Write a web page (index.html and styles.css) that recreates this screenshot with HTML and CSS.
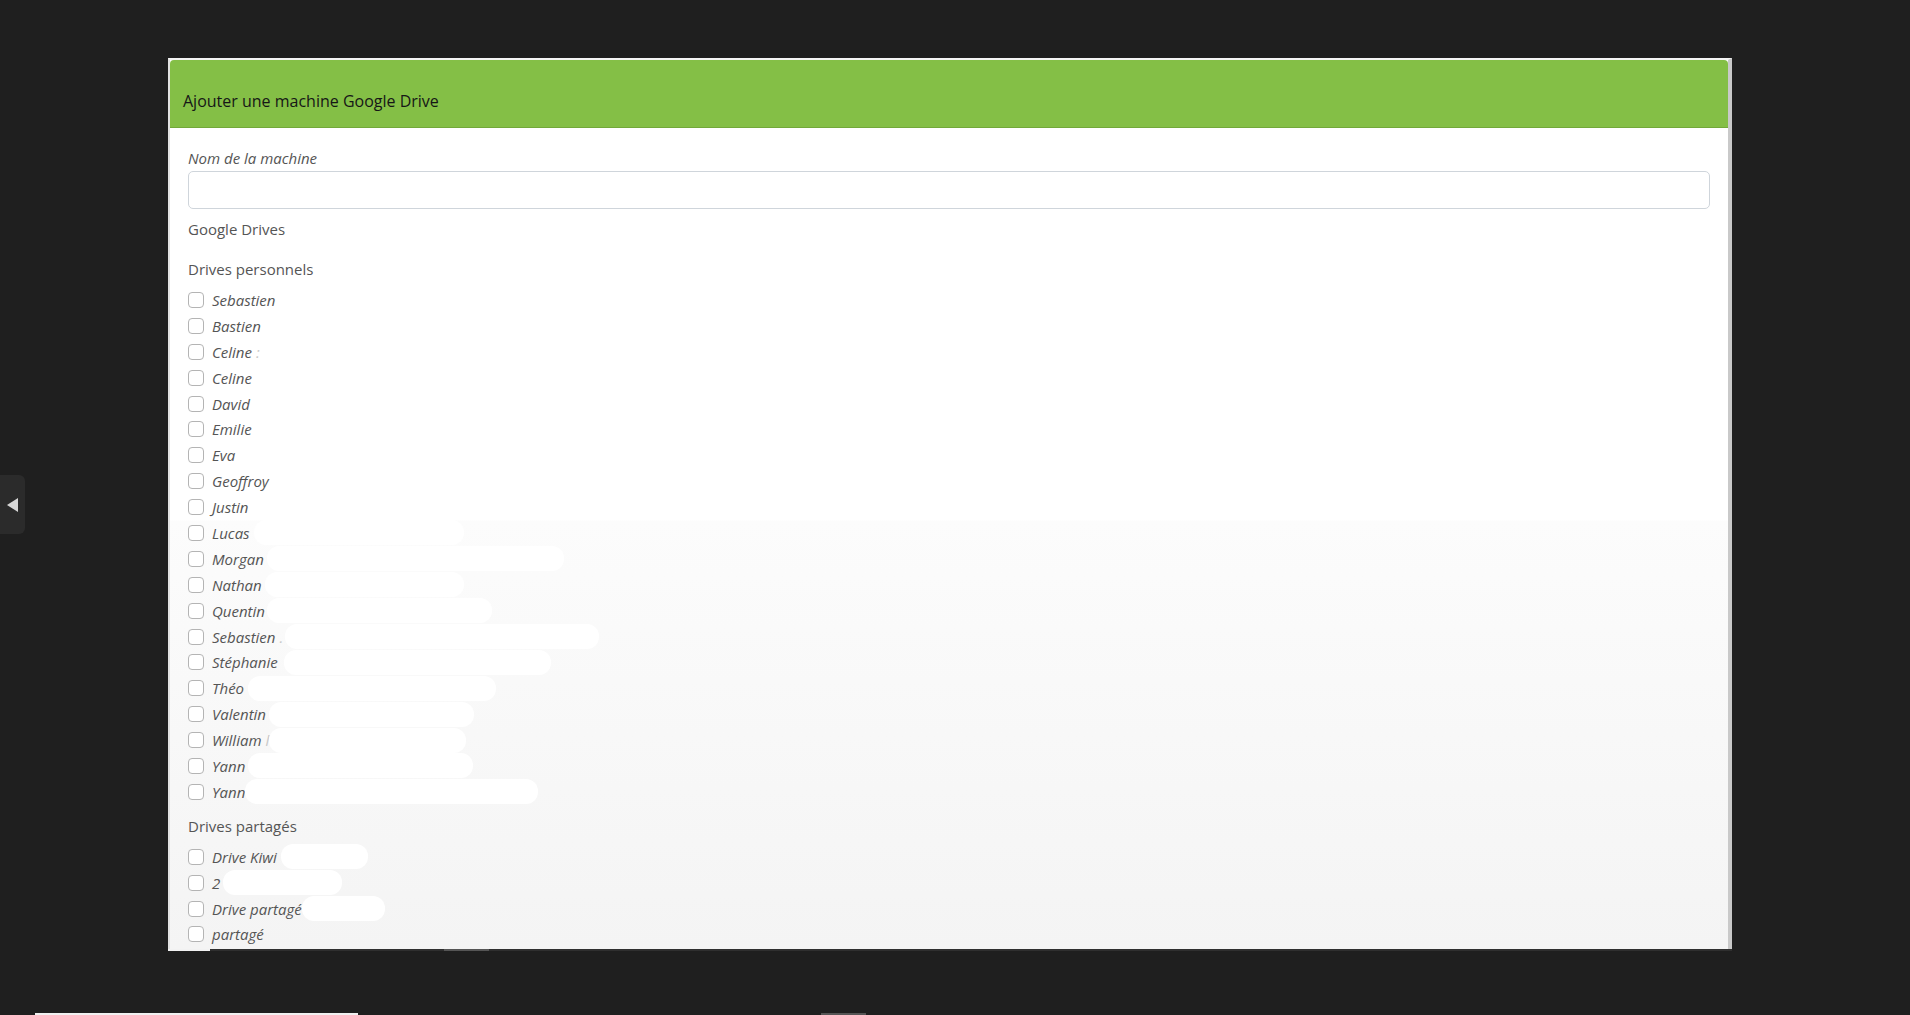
FILE: index.html
```html
<!DOCTYPE html>
<html lang="fr">
<head>
<meta charset="utf-8">
<title>Ajouter une machine Google Drive</title>
<link rel="stylesheet" href="styles.css">
</head>
<body>
<div class="sidetab"><span class="tri"></span></div>
<main class="panel">
  <header class="panel-head">Ajouter une machine Google Drive</header>
  <div class="panel-body">
    <label class="field-label" for="nom">Nom de la machine</label>
    <input class="field-input" id="nom" type="text">
    <div class="group-title">Google Drives</div>
    <div class="sub-title">Drives personnels</div>
    <ul class="checks">
      <li><input type="checkbox" class="cb"><span class="lbl">Sebastien</span></li>
      <li><input type="checkbox" class="cb"><span class="lbl">Bastien</span></li>
      <li><input type="checkbox" class="cb"><span class="lbl">Celine <span class="dim">:</span></span></li>
      <li><input type="checkbox" class="cb"><span class="lbl">Celine</span></li>
      <li><input type="checkbox" class="cb"><span class="lbl">David</span></li>
      <li><input type="checkbox" class="cb"><span class="lbl">Emilie</span></li>
      <li><input type="checkbox" class="cb"><span class="lbl">Eva</span></li>
      <li><input type="checkbox" class="cb"><span class="lbl">Geoffroy</span></li>
      <li><input type="checkbox" class="cb"><span class="lbl">Justin</span></li>
      <li><input type="checkbox" class="cb"><span class="lbl">Lucas</span><span class="blob" style="--w:210px;--m:4px"></span></li>
      <li><input type="checkbox" class="cb"><span class="lbl">Morgan</span><span class="blob" style="--w:297px;--m:3px"></span></li>
      <li><input type="checkbox" class="cb"><span class="lbl">Nathan</span><span class="blob" style="--w:199px;--m:3px"></span></li>
      <li><input type="checkbox" class="cb"><span class="lbl">Quentin</span><span class="blob" style="--w:225px;--m:2px"></span></li>
      <li><input type="checkbox" class="cb"><span class="lbl">Sebastien <span class="dim">.</span></span><span class="blob" style="--w:314px;--m:2px"></span></li>
      <li><input type="checkbox" class="cb"><span class="lbl">Stéphanie</span><span class="blob" style="--w:267px;--m:6px"></span></li>
      <li><input type="checkbox" class="cb"><span class="lbl">Théo</span><span class="blob" style="--w:248px;--m:4px"></span></li>
      <li><input type="checkbox" class="cb"><span class="lbl">Valentin</span><span class="blob" style="--w:205px;--m:3px"></span></li>
      <li><input type="checkbox" class="cb"><span class="lbl">William <span class="dim">l</span></span><span class="blob" style="--w:197px;--m:0px"></span></li>
      <li><input type="checkbox" class="cb"><span class="lbl">Yann</span><span class="blob" style="--w:225px;--m:3px"></span></li>
      <li><input type="checkbox" class="cb"><span class="lbl">Yann</span><span class="blob" style="--w:293px;--m:0px"></span></li>
    </ul>
    <div class="sub-title sub-shared">Drives partagés</div>
    <ul class="checks">
      <li><input type="checkbox" class="cb"><span class="lbl">Drive Kiwi</span><span class="blob" style="--w:87px;--m:4px"></span></li>
      <li><input type="checkbox" class="cb"><span class="lbl">2</span><span class="blob" style="--w:119px;--m:3px"></span></li>
      <li><input type="checkbox" class="cb"><span class="lbl">Drive partagé</span><span class="blob" style="--w:83px;--m:0px"></span></li>
      <li><input type="checkbox" class="cb"><span class="lbl">partagé</span></li>
    </ul>
  </div>
</main>
<div class="hscroll">
  <span class="hs-edge"></span>
  <span class="hs-thumb"></span>
</div>
<footer class="taskbar">
  <span class="tb-line"></span>
  <span class="tb-mark"></span>
</footer>
</body>
</html>
```
FILE: styles.css
```css
* { box-sizing: border-box; }

html, body {
  margin: 0;
  padding: 0;
}

body {
  width: 1910px;
  height: 1015px;
  overflow: hidden;
  background: #1f1f1f;
  font-family: "Open Sans", "Noto Sans", "Liberation Sans", sans-serif;
  color: #555;
  position: relative;
}

/* left collapsed side tab (overlay) */
.sidetab {
  position: absolute;
  left: 0;
  top: 475px;
  width: 25px;
  height: 59px;
  background: #2b2b2b;
  border-radius: 0 6px 6px 0;
  display: flex;
  align-items: center;
  padding-left: 7px;
}
.tri {
  width: 0;
  height: 0;
  border-top: 7px solid transparent;
  border-bottom: 7px solid transparent;
  border-right: 11px solid #d8d8d8;
}

/* panel */
.panel {
  margin: 58px 0 0 168px;
  width: 1564px;
  height: 891px;
  overflow: hidden;
  border-top: 2px solid #f4f4f4;
  border-left: 2px solid #e2e2e2;
  border-right: 4px solid #c9c9c9;
  background: #fff;
  display: flex;
  flex-direction: column;
}

.panel-head {
  flex: none;
  height: 68px;
  padding: 30px 13px 0;
  background: #84bf46;
  border-bottom: 1px solid #72a83a;
  border-radius: 4px 4px 0 0;
  color: #161616;
  font-size: 16px;
  line-height: 22px;
}

.panel-body {
  flex: 1;
  padding: 19px 18px 0;
  background: linear-gradient(to bottom, #ffffff 0, #ffffff 392px, #fcfcfc 393px, #f4f4f4 100%);
  font-size: 15px;
  line-height: 22px;
}

.field-label {
  display: block;
  font-style: italic;
  color: #555;
}

.field-input {
  display: block;
  width: 100%;
  height: 38px;
  margin-top: 2px;
  border: 1px solid #cfd5db;
  border-radius: 5px;
  background: #fff;
  font: inherit;
}

.group-title {
  margin-top: 9px;
  color: #555;
}

.sub-title {
  margin-top: 18px;
  color: #555;
}

.sub-shared {
  margin-top: 10px;
}

.checks {
  list-style: none;
  margin: 7px 0 0;
  padding: 0;
}

.checks li {
  height: 25.9px;
  display: flex;
  align-items: center;
}

.cb {
  -webkit-appearance: none;
  appearance: none;
  flex: none;
  width: 16px;
  height: 16px;
  margin: 0 8px 0 0;
  border: 1px solid #b4b4b4;
  border-radius: 4px;
  background: #fff;
}

.lbl {
  font-style: italic;
  color: #555;
  white-space: pre;
}

.dim {
  color: #c8c8c8;
}

.blob {
  display: inline-block;
  width: var(--w);
  height: 25px;
  margin-left: var(--m);
  border-radius: 12px;
  background: #fff;
}

/* bottom scroll edge */
.hscroll {
  margin-left: 168px;
  width: 1564px;
  height: 2px;
  background: #2f2f2f;
  display: flex;
}
.hs-edge {
  width: 42px;
  background: #f2f2f2;
}
.hs-thumb {
  margin-left: 234px;
  width: 45px;
  background: #555;
}

/* taskbar marks */
.taskbar {
  margin-top: 62px;
  padding-left: 35px;
  height: 2px;
  display: flex;
}
.tb-line {
  width: 323px;
  background: #f0f0f0;
}
.tb-mark {
  margin-left: 463px;
  width: 45px;
  background: #555;
}
```
